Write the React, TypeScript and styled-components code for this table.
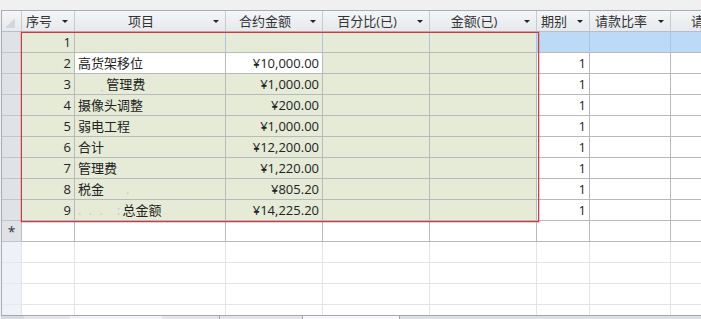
import React from "react";
import styled, { createGlobalStyle } from "styled-components";

const GlobalStyle = createGlobalStyle`
    html, body {
        margin: 0;
        padding: 0;
        background: #f0f0f0;
        font-family: "Open Sans", "Noto Sans CJK SC", sans-serif;
        font-size: 13px;
        color: #222;
    }
`;

const Frame = styled.div`
    width: 701px;
    height: 319px;
    padding: 10px 0 0 1px;
    box-sizing: border-box;
    display: flex;
    flex-direction: column;
    overflow: hidden;
`;

const Sheet = styled.div`
    position: relative;
    flex: 1;
    overflow: hidden;
    background: #fff;
    border-top: 1px solid #a9adb3;
    border-left: 1px solid #a9adb3;
`;

const Row = styled.div`
    display: grid;
    grid-template-columns: 20px 53px 151px 97px 107px 107px 53px 81px 111px;
    height: 21px;
`;

const HeaderCell = styled.div`
    display: flex;
    align-items: center;
    background: linear-gradient(#f4f6f8, #e6e9ed);
    border-right: 1px solid #c6cbd2;
    border-bottom: 1px solid #b9bec6;
    color: #333;
    white-space: nowrap;
    overflow: hidden;

    .label {
        flex: 1;
        text-align: center;
        line-height: 20px;
    }
`;

const Arrow = styled.span`
    width: 0;
    height: 0;
    margin: 0 6px 0 6px;
    border-left: 3px solid transparent;
    border-right: 3px solid transparent;
    border-top: 3px solid #222;
`;

const Corner = styled.div`
    background: linear-gradient(#f4f6f8, #e6e9ed);
    border-right: 1px solid #c6cbd2;
    border-bottom: 1px solid #b9bec6;
    display: flex;
    align-items: flex-end;
    padding: 0 0 3px 3px;
`;

const Selector = styled.div`
    background: ${(p) => (p.$empty ? "#eef1f8" : "#dfe3e8")};
    border-right: 1px solid ${(p) => (p.$empty ? "#e1e4ea" : "#b9bec6")};
    border-bottom: 1px solid ${(p) => (p.$empty ? "#e6e8ec" : "#c2c6cc")};
    display: flex;
    align-items: center;
    justify-content: center;
    font-size: 14px;
    color: #333;
`;

const Cell = styled.div`
    background: ${(p) => p.$bg || "#fff"};
    border-right: 1px solid ${(p) => p.$vline || p.$line || "#b9b9b9"};
    border-bottom: 1px solid ${(p) => p.$line || "#b9b9b9"};
    text-align: ${(p) => p.$align || "left"};
    padding: 0 3px;
    line-height: 20px;
    white-space: nowrap;
    overflow: hidden;
`;

const Blur = styled.span`
    color: #c8c8c8;
    letter-spacing: 2px;
`;

const Indent = styled.span`
    display: inline-block;
    width: ${(p) => p.$w}px;
`;

const SelectionBox = styled.div`
    position: absolute;
    left: 19px;
    top: 21px;
    width: 516px;
    height: 188px;
    border: 1px solid #cc3a42;
    box-shadow: 0 0 0 1px rgba(220, 110, 110, 0.35);
    pointer-events: none;
`;

const BottomBar = styled.div`
    height: 3px;
    border-top: 1px solid #a3a7ad;
    background: #dde0e4;
    display: flex;
`;

const BarPart = styled.div`
    width: ${(p) => p.$w}px;
    background: ${(p) => p.$bg};
    border-right: 1px solid ${(p) => p.$edge || "transparent"};
`;

const GREEN = "#e5ebd7";
const BLUE = "#bcd9f6";

const columns = [
    { title: "序号", align: "right" },
    { title: "项目", align: "left" },
    { title: "合约金额", align: "right" },
    { title: "百分比(已)", align: "right" },
    { title: "金额(已)", align: "right" },
    { title: "期别", align: "right" },
    { title: "请款比率", align: "right" },
    { title: "请款金额", align: "right" },
];

const rows: React.ReactNode[][] = [
    ["1", "", "", "", "", "", "", ""],
    ["2", "高货架移位", "¥10,000.00", "", "", "1", "", ""],
    ["3", <><Indent $w={22} /><Blur>ˎ</Blur>管理费</>, "¥1,000.00", "", "", "1", "", ""],
    ["4", "摄像头调整", "¥200.00", "", "", "1", "", ""],
    ["5", "弱电工程", "¥1,000.00", "", "", "1", "", ""],
    ["6", "合计", "¥12,200.00", "", "", "1", "", ""],
    ["7", "管理费", "¥1,220.00", "", "", "1", "", ""],
    ["8", <>税金<Indent $w={22} /><Blur>.</Blur></>, "¥805.20", "", "", "1", "", ""],
    ["9", <><Blur>. . .</Blur><Indent $w={12} /><Blur>:</Blur>总金额</>, "¥14,225.20", "", "", "1", "", ""],
];

// row 2: anchor cells of the selection stay white
const cellBg = (r: number, c: number) => {
    if (r === 1 && (c === 1 || c === 2)) return "#fff";
    if (c < 5) return GREEN;
    if (r === 0) return BLUE;
    return "#fff";
};

const App = () => {
    return (
        <Frame>
            <GlobalStyle />
            <Sheet>
                <Row>
                    <Corner>
                        <svg width="10" height="10" viewBox="0 0 10 10">
                            <polygon points="10,0 10,10 0,10" fill="#d3d7dd" />
                        </svg>
                    </Corner>
                    {columns.map((col) => (
                        <HeaderCell key={col.title}>
                            <span className="label">{col.title}</span>
                            <Arrow />
                        </HeaderCell>
                    ))}
                </Row>

                {rows.map((row, r) => (
                    <Row key={r}>
                        <Selector />
                        {row.map((val, c) => (
                            <Cell
                                key={c}
                                $bg={cellBg(r, c)}
                                $align={columns[c].align}
                                $vline={r === 0 && c > 0 ? "#a9c6e6" : undefined}
                            >
                                {val}
                            </Cell>
                        ))}
                    </Row>
                ))}

                {/* new record row */}
                <Row>
                    <Selector>*</Selector>
                    {columns.map((col) => (
                        <Cell key={col.title} />
                    ))}
                </Row>

                {[0, 1, 2, 3].map((i) => (
                    <Row key={"e" + i}>
                        <Selector $empty />
                        {columns.map((col) => (
                            <Cell key={col.title} $line="#e4e4e4" />
                        ))}
                    </Row>
                ))}

                <SelectionBox />
            </Sheet>
            <BottomBar>
                <BarPart $w={22} $bg="#d6d9de" />
                <BarPart $w={46} $bg="#e3e5e9" />
                <BarPart $w={92} $bg="#f2f3f5" />
                <BarPart $w={57} $bg="#e3e5e9" $edge="#a3a7ad" />
                <BarPart $w={83} $bg="#e3e5e9" $edge="#a3a7ad" />
                <BarPart $w={98} $bg="#f7f8f9" $edge="#a3a7ad" />
                <BarPart $w={303} $bg="#dcdfe3" />
            </BottomBar>
        </Frame>
    );
};

export default App;
